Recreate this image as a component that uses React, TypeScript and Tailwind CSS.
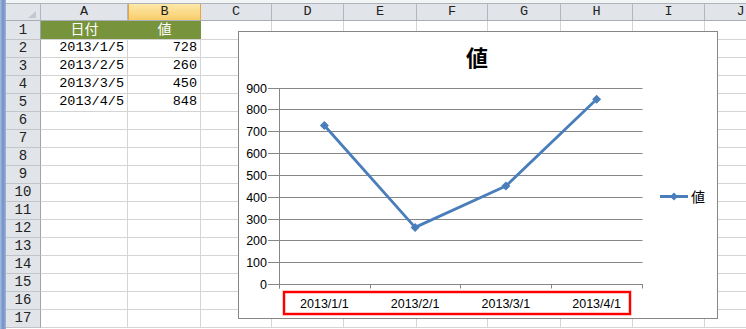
const columns = [
  { label: 'A', w: 'w-[87px]' },
  { label: 'B', w: 'w-[73px]', selected: true },
  { label: 'C', w: 'w-[71px]' },
  { label: 'D', w: 'w-[72px]' },
  { label: 'E', w: 'w-[73px]' },
  { label: 'F', w: 'w-[71px]' },
  { label: 'G', w: 'w-[73px]' },
  { label: 'H', w: 'w-[72px]' },
  { label: 'I', w: 'w-[72px]' },
  { label: 'J', w: 'w-[72px]' },
]

const data = [
  { date: '2013/1/5', value: 728 },
  { date: '2013/2/5', value: 260 },
  { date: '2013/3/5', value: 450 },
  { date: '2013/4/5', value: 848 },
]

const rowNumbers = Array.from({ length: 17 }, (_, i) => i + 1)

const cellFont = { fontFamily: '"Liberation Mono", "Noto Sans CJK JP", monospace' }

// chart geometry, in px inside the chart border
const gridY = [252, 230, 208, 187, 165, 143, 121, 99, 77, 56]
const catX = [40.5, 131.5, 221.5, 312.5, 403.5]
const pointX = [85.4, 176.1, 266.9, 357.6]
const toY = (v: number) => 252 - v * 0.21778

function Diamond({ x, y, r = 4.5 }: { x: number; y: number; r?: number }) {
  return <polygon points={`${x},${y - r} ${x + r},${y} ${x},${y + r} ${x - r},${y}`} fill="#4a7ebb" />
}

function LineChart() {
  const pts = data.map((d, i) => `${pointX[i]},${toY(d.value)}`).join(' ')
  return (
    <div className="absolute left-[232px] top-[31px] w-[480px] h-[288px] border border-[#868686] bg-white">
      <svg width="478" height="286" className="absolute inset-0" style={{ fontFamily: '"Liberation Sans", Arial, sans-serif' }}>
        <text x="238" y="34" textAnchor="middle" fontSize="22" fontWeight="bold" fill="#000" style={{ fontFamily: '"Noto Sans CJK JP", sans-serif' }}>
          値
        </text>

        {/* gridlines + left ticks */}
        {gridY.map((y, i) => (
          <g key={i}>
            <line x1="29" x2="403.5" y1={y + 0.5} y2={y + 0.5} stroke="#868686" strokeWidth="1" />
            <text x="28" y={y + 5} textAnchor="end" fontSize="12.5" fill="#000">
              {i * 100}
            </text>
          </g>
        ))}
        <line x1="40.5" x2="40.5" y1="56" y2="256.5" stroke="#868686" strokeWidth="1" />
        {catX.map((x, i) => (
          <line key={i} x1={x} x2={x} y1="252" y2="256.5" stroke="#868686" strokeWidth="1" />
        ))}

        <polyline points={pts} fill="none" stroke="#4a7ebb" strokeWidth="2.8" strokeLinejoin="round" strokeLinecap="round" />
        {data.map((d, i) => (
          <Diamond key={i} x={pointX[i]} y={toY(d.value)} />
        ))}

        {/* category labels */}
        <rect x="45" y="260" width="346" height="22" fill="none" stroke="#ffb3b3" strokeWidth="3.5" />
        <rect x="45" y="260" width="346" height="22" fill="none" stroke="#ff0000" strokeWidth="2" />
        {['2013/1/1', '2013/2/1', '2013/3/1', '2013/4/1'].map((t, i) => (
          <text key={t} x={pointX[i]} y="276" textAnchor="middle" fontSize="12.5" fill="#000">
            {t}
          </text>
        ))}

        {/* legend */}
        <line x1="421" x2="449" y1="164.5" y2="164.5" stroke="#4a7ebb" strokeWidth="3" />
        <Diamond x={435} y={164.5} r={4} />
        <text x="452" y="170" fontSize="14" fill="#000" style={{ fontFamily: '"Noto Sans CJK JP", sans-serif' }}>
          値
        </text>
      </svg>
    </div>
  )
}

export default function App() {
  return (
    <div className="w-[746px] h-[329px] overflow-hidden flex bg-white">
      {/* window frame */}
      <div className="w-[6px] shrink-0 bg-gradient-to-r from-[#a9bde0] via-[#6f8fc6] to-[#9fb4d6]" />

      <div className="relative flex-1 overflow-hidden">
        <div className="h-[4px] bg-[#f3f4f6] border-b border-[#aeb3b9]" />

        {/* column headers */}
        <div className="flex h-[17px] bg-[#e1e4e8] border-b border-[#a9aeb4] text-[13.5px] text-[#222]" style={cellFont}>
          <div className="relative w-[35px] shrink-0 border-r border-[#b3b8be]">
            <svg width="8" height="7" className="absolute right-[4px] bottom-[2px]">
              <polygon points="8,0 8,7 0,7" fill="#c4c8ce" />
            </svg>
          </div>
          {columns.map((c) => (
            <div
              key={c.label}
              className={
                c.selected
                  ? `${c.w} shrink-0 flex items-center justify-center bg-gradient-to-b from-[#fde8a8] to-[#f8cd6a] border-x border-[#e8a640]`
                  : `${c.w} shrink-0 flex items-center justify-center border-r border-[#b3b8be]`
              }
            >
              {c.label}
            </div>
          ))}
        </div>

        {/* rows */}
        {rowNumbers.map((n) => (
          <div key={n} className={`flex ${n === 1 ? 'h-[19px]' : 'h-[18px]'} text-[13.5px] text-black`} style={cellFont}>
            <div className="w-[35px] shrink-0 flex items-center justify-center bg-[#e1e4e8] border-r border-b border-r-[#9ea4ab] border-b-[#c2c6cb] text-[#222] text-[14px]">
              {n}
            </div>
            {columns.map((c, ci) => {
              if (n === 1 && ci < 2) {
                return (
                  <div key={c.label} className={`${c.w} shrink-0 flex items-center justify-center bg-[#77933c] text-white text-[14px] border-b border-[#d4d4d4]`}>
                    {ci === 0 ? '日付' : '値'}
                  </div>
                )
              }
              const d = n >= 2 && n <= 5 ? data[n - 2] : null
              return (
                <div key={c.label} className={`${c.w} shrink-0 flex items-center justify-end pr-[3px] border-r border-b border-[#d4d4d4]`}>
                  {d && ci === 0 ? d.date : d && ci === 1 ? d.value : ''}
                </div>
              )
            })}
          </div>
        ))}

        <LineChart />
      </div>
    </div>
  )
}
